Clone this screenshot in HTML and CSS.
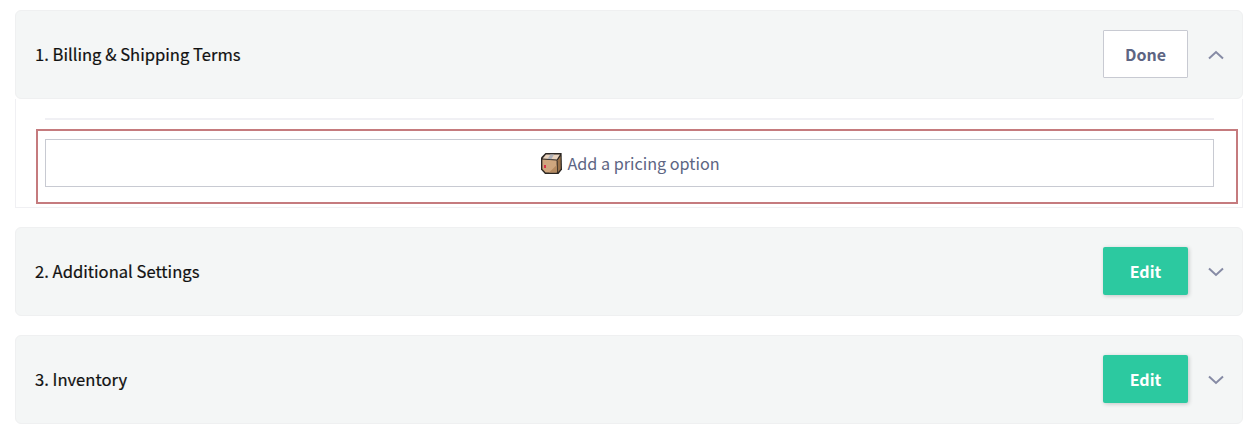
FILE: index.html
```html
<!DOCTYPE html>
<html lang="en">
<head>
    <meta charset="UTF-8">
    <title>Product form</title>
    <link rel="stylesheet" href="styles.css">
</head>
<body>
    <div class="section">
        <div class="section-header">
            <div class="section-title">1. Billing &amp; Shipping Terms</div>
            <button class="btn btn-done">Done</button>
            <svg class="chevron" viewBox="0 0 16 10"><path d="M1 8.5L8 2l7 6.5"/></svg>
        </div>
        <div class="section-body">
            <hr>
            <div class="highlight">
                <button class="add-option">
                    <svg class="box-icon" viewBox="0 0 21 21">
                        <path d="M4.5 0H20.6L21 16.5 17.5 21H4L0 16.5V4.5z" fill="#2b2622"/>
                        <path d="M5 1.4H19L15.8 6.4 1.6 5.6z" fill="#e8d2bd"/>
                        <path d="M1.4 6.6L15.6 7.4 15.8 19.6H4.6L1.4 16z" fill="#cfa67e"/>
                        <path d="M16.6 7.2L19.6 3 19.7 16 16.8 19.6z" fill="#9a7149"/>
                        <path d="M9.4 1.4H13L10.4 6.2 6.6 6z" fill="#aeb0b8"/>
                        <path d="M3 12h2v3h-2z" fill="#d8324a"/>
                        <path d="M8 19.6L15.8 12V19.6z" fill="#b58a60"/>
                    </svg>
                    Add a pricing option
                </button>
            </div>
        </div>
    </div>

    <div class="section">
        <div class="section-header">
            <div class="section-title">2. Additional Settings</div>
            <button class="btn btn-edit">Edit</button>
            <svg class="chevron" viewBox="0 0 16 10"><path d="M1 1.5L8 8l7-6.5"/></svg>
        </div>
    </div>

    <div class="section">
        <div class="section-header">
            <div class="section-title">3. Inventory</div>
            <button class="btn btn-edit">Edit</button>
            <svg class="chevron" viewBox="0 0 16 10"><path d="M1 1.5L8 8l7-6.5"/></svg>
        </div>
    </div>
</body>
</html>
```

FILE: styles.css
```css
body {
    margin: 0;
    padding: 10px 16px 0 15px;
    background: #fff;
    font-family: "Noto Sans CJK JP", "Noto Sans", sans-serif;
    color: #111;
}
hr {
    height: 2px;
    margin: 0 24px 9px 9px;
    border: 0;
    background: #f0f0f4;
}
button {
    font-family: inherit;
    cursor: pointer;
}
.section {
    margin-bottom: 19px;
}
.section-header {
    display: flex;
    align-items: center;
    height: 89px;
    box-sizing: border-box;
    padding: 0 19px;
    background: #f4f6f6;
    border: 1px solid #eff0f1;
    border-radius: 6px;
}
.section-title {
    flex: 1;
    padding-bottom: 2px;
    font-size: 16.6px;
    font-weight: 400;
    line-height: 24px;
    color: #111;
    -webkit-text-stroke: 0.2px #111;
}
.btn {
    width: 85px;
    height: 48px;
    margin-top: -1px;
    padding: 0 0 1px;
    font-size: 16px;
    font-weight: 700;
    border-radius: 1px;
}
.btn-done {
    background: #fff;
    border: 1px solid #c8cad2;
    color: #5d6583;
}
.btn-edit {
    background: #2cc9a0;
    border: 0;
    border-radius: 2px;
    color: #fff;
    box-shadow: 1px 1px 4px rgba(0, 0, 0, 0.2);
}
.chevron {
    width: 16px;
    height: 10px;
    margin-left: 20px;
    margin-right: -1px;
    fill: none;
    stroke: #868ba5;
    stroke-width: 2;
}
.section-body {
    padding: 19px 4px 3px 20px;
    background: #fff;
    border: 1px solid #f0f0f3;
    border-top: 0;
}
.highlight {
    padding: 8px 22px 15px 7px;
    border: 2px solid #c57b7e;
}
.add-option {
    display: flex;
    align-items: center;
    justify-content: center;
    width: 100%;
    height: 48px;
    padding: 0 0 0 2px;
    background: #fff;
    border: 1px solid #c8cad2;
    font-size: 16.2px;
    font-weight: 400;
    color: #5d6583;
}
.box-icon {
    width: 21px;
    height: 21px;
    margin-right: 5px;
}
```
